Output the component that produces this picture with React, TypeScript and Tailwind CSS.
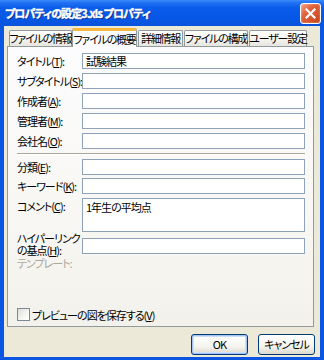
import React from "react";

const fieldsTop = [
  { label: "タイトル", key: "T", value: "試験結果" },
  { label: "サブタイトル", key: "S", value: "" },
  { label: "作成者", key: "A", value: "" },
  { label: "管理者", key: "M", value: "" },
  { label: "会社名", key: "O", value: "" },
];

const tabs = [
  { name: "ファイルの情報", w: "w-[63px]", active: false },
  { name: "ファイルの概要", w: "w-[65px]", active: true },
  { name: "詳細情報", w: "w-[45px]", active: false },
  { name: "ファイルの構成", w: "w-[64px]", active: false },
  { name: "ユーザー設定", w: "w-[58px]", active: false },
];

function Label({ text, k }: { text: string; k: string }) {
  return (
    <span className="whitespace-nowrap">
      {text}(<u>{k}</u>):
    </span>
  );
}

function Field({ value = "", className = "h-[16px]" }: { value?: string; className?: string }) {
  return (
    <div
      className={`w-[223px] ${className} bg-white border border-[#8fa3b8] px-[3px] leading-[14px] text-black`}
    >
      {value}
    </div>
  );
}

function CloseButton() {
  return (
    <div className="w-[21px] h-[21px] rounded-[3px] border border-white bg-[linear-gradient(135deg,#f0a48a_0%,#e2643d_35%,#c9421a_100%)] flex items-center justify-center shadow-[inset_0_0_2px_rgba(255,255,255,0.5)]">
      <svg width="11" height="11" viewBox="0 0 11 11" aria-hidden="true">
        <path d="M1.5 1.5 L9.5 9.5 M9.5 1.5 L1.5 9.5" stroke="white" strokeWidth="2.2" strokeLinecap="square" />
      </svg>
    </div>
  );
}

function XpButton({ label, isDefault }: { label: string; isDefault?: boolean }) {
  return (
    <button
      type="button"
      className={`w-[57px] h-[21px] rounded-[3px] border border-[#003c74] bg-[linear-gradient(to_bottom,#ffffff_0%,#f5f4ef_60%,#dcd8cc_100%)] text-[11px] leading-none text-black flex items-center justify-center ${
        isDefault ? "shadow-[inset_0_0_0_1px_#a6c3f2,inset_0_0_0_2px_#cde0fb]" : ""
      }`}
    >
      {label}
    </button>
  );
}

export default function App() {
  return (
    <div className="w-[324px] h-[360px] flex flex-col bg-[#0a55e2] font-['Noto_Sans_CJK_JP',sans-serif] [font-feature-settings:'palt'] text-[11px] tracking-[-1px] text-black overflow-hidden">
      {/* タイトルバー */}
      <div className="h-[26px] shrink-0 flex items-center justify-between pl-[5px] pr-[3px] bg-[linear-gradient(to_bottom,#3b8dfb_0%,#2272f3_10%,#0a5ce9_30%,#0657e6_70%,#0a52dc_100%)]">
        <span className="text-white font-bold text-[11px] tracking-[-0.9px] [-webkit-text-stroke:0.4px_white] [text-shadow:1px_1px_0_#0a2a8a]">
          プロパティの設定3.xls プロパティ
        </span>
        <CloseButton />
      </div>

      {/* 本体 */}
      <div className="flex-1 mx-[4px] mb-[3px] bg-[#ece9d8] flex flex-col pt-[2px] pl-[3px] pr-[5px] pb-[2px]">
        {/* タブ */}
        <div className="h-[18px] flex items-end pl-[2px] relative z-10 tracking-[-1.2px]">
          {tabs.map((t, i) =>
            t.active ? (
              <div
                key={t.name}
                className={`${t.w} h-[19px] -mb-[1px] flex items-center justify-center bg-[#fcfcfe] border-x border-[#919b9c] border-t-[3px] border-t-[#f5b93e] rounded-t-[2px] whitespace-nowrap`}
              >
                {t.name}
              </div>
            ) : (
              <div
                key={t.name}
                className={`${t.w} h-[16px] ${i > 1 ? "ml-[1px]" : ""} flex items-center justify-center bg-[linear-gradient(to_bottom,#ffffff_0%,#f3f3ef_60%,#e6e5de_100%)] border border-b-0 border-[#919b9c] rounded-t-[2px] whitespace-nowrap`}
              >
                {t.name}
              </div>
            )
          )}
        </div>

        {/* タブパネル */}
        <div className="w-[307px] h-[281px] border border-[#919b9c] bg-[linear-gradient(to_bottom,#fcfcfe_0%,#f8f7f3_60%,#f2f1eb_100%)] flex flex-col pl-[9px] pr-[8px] pt-[6px] pb-[3px]">
          <div className="flex flex-col gap-[4px]">
            {fieldsTop.map((f) => (
              <div key={f.key} className="flex items-center">
                <div className="w-[65px] leading-[16px]">
                  <Label text={f.label} k={f.key} />
                </div>
                <Field value={f.value} />
              </div>
            ))}
          </div>

          <div className="mt-[4px] h-[2px] border-t border-[#aca899] border-b border-b-white" />

          <div className="mt-[4px] flex items-center">
            <div className="w-[65px] leading-[16px]">
              <Label text="分類" k="E" />
            </div>
            <Field />
          </div>
          <div className="mt-[3px] flex items-center">
            <div className="w-[65px] leading-[16px]">
              <Label text="キーワード" k="K" />
            </div>
            <Field />
          </div>
          <div className="mt-[4px] flex items-start">
            <div className="w-[65px] leading-[16px]">
              <Label text="コメント" k="C" />
            </div>
            <Field value="1年生の平均点" className="h-[34px] pt-[1px]" />
          </div>
          <div className="mt-[6px] flex items-start">
            <div className="w-[65px] h-[16px] -mt-[6px] leading-[12px] whitespace-nowrap">
              <div>ハイパーリンク</div>
              <Label text="の基点" k="H" />
            </div>
            <Field />
          </div>
          <div className="mt-[3px] leading-[12px] text-[#aca899]">テンプレート:</div>

          <div className="mt-auto flex items-center gap-[2px]">
            <div className="w-[13px] h-[13px] border border-[#7a8899] bg-[linear-gradient(135deg,#dcdcd7_0%,#f6f6f4_60%,#ffffff_100%)]" />
            <span>
              プレビューの図を保存する(<u>V</u>)
            </span>
          </div>
        </div>

        {/* ボタン */}
        <div className="mt-[7px] flex justify-end gap-[10px]">
          <XpButton label="OK" isDefault />
          <XpButton label="キャンセル" />
        </div>
      </div>
    </div>
  );
}
